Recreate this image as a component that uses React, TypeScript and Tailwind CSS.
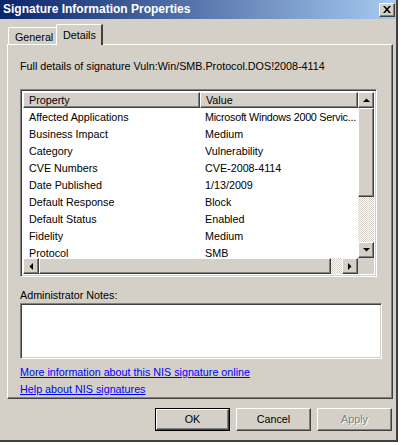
import React from "react";

const raised =
  "border border-t-white border-l-white border-r-[#404040] border-b-[#404040] shadow-[inset_-1px_-1px_#808080]";
const sunken =
  "border border-t-[#808080] border-l-[#808080] border-r-white border-b-white shadow-[inset_1px_1px_#404040,inset_-1px_-1px_#d4d0c8]";

function Arrow({ dir }: { dir: "up" | "down" | "left" | "right" }) {
  const pts: Record<string, string> = {
    up: "0,4 7,4 3.5,0.5",
    down: "0,0 7,0 3.5,3.5",
    left: "4,0 4,7 0.5,3.5",
    right: "0,0 0,7 3.5,3.5",
  };
  const w = dir === "up" || dir === "down" ? 7 : 4;
  const h = dir === "up" || dir === "down" ? 4 : 7;
  return (
    <svg width={w} height={h} viewBox={`0 0 ${w} ${h}`}>
      <polygon points={pts[dir]} fill="#000" />
    </svg>
  );
}

function SBtn({ dir }: { dir: "up" | "down" | "left" | "right" }) {
  return (
    <div className={`w-[16px] h-[16px] shrink-0 bg-[#d4d0c8] flex items-center justify-center ${raised}`}>
      <Arrow dir={dir} />
    </div>
  );
}

const rows: [string, string][] = [
  ["Affected Applications", "Microsoft Windows 2000 Servic..."],
  ["Business Impact", "Medium"],
  ["Category", "Vulnerability"],
  ["CVE Numbers", "CVE-2008-4114"],
  ["Date Published", "1/13/2009"],
  ["Default Response", "Block"],
  ["Default Status", "Enabled"],
  ["Fidelity", "Medium"],
  ["Protocol", "SMB"],
];

const checker =
  "bg-[repeating-conic-gradient(#d4d0c8_0%_25%,#ffffff_0%_50%)] bg-[length:2px_2px]";

export default function App() {
  return (
    <div
      className="w-[402px] h-[445px] bg-white text-[10.75px] leading-[13px] text-black"
      style={{ fontFamily: '"Liberation Sans", Arial, sans-serif' }}
    >
      <div className="w-[398px] h-[442px] bg-[#d4d0c8] border-r-2 border-b-2 border-r-[#404040] border-b-[#404040] flex flex-col">
        {/* Title bar */}
        <div className="h-[19px] shrink-0 flex items-center justify-between pl-[3px] pr-[1px] bg-[linear-gradient(to_right,#0a246a,#a6caf0)]">
          <span className="text-white font-bold text-[12px]">Signature Information Properties</span>
          <div className={`w-[16px] h-[14px] bg-[#d4d0c8] flex items-center justify-center ${raised}`}>
            <svg width="8" height="7" viewBox="0 0 8 7">
              <path d="M0 0h2l2 2.2L6 0h2L5 3.5 8 7H6L4 4.8 2 7H0l3-3.5z" fill="#000" />
            </svg>
          </div>
        </div>

        {/* Tabs */}
        <div className="flex items-end pl-[8px] mt-[5px] h-[20px] shrink-0 relative z-10">
          <div className="h-[17px] w-[49px] border-t border-l border-t-white border-l-white border-r border-r-[#808080] rounded-tl-[2px] flex items-start pt-[3px] pl-[6px]">
            General
          </div>
          <div className="h-[21px] w-[47px] -ml-[1px] mb-[-1px] bg-[#d4d0c8] border-t border-l border-t-white border-l-white border-r-2 border-r-[#404040] rounded-tl-[2px] flex items-start pt-[4px] pl-[6px]">
            Details
          </div>
        </div>

        {/* Panel */}
        <div className="ml-[7px] w-[386px] h-[355px] shrink-0 border border-t-white border-l-white border-r-[#404040] border-b-[#404040] shadow-[inset_-1px_-1px_#808080] flex flex-col pl-[12px] pt-[15px]">
          <div>Full details of signature Vuln:Win/SMB.Protocol.DOS!2008-4114</div>

          {/* List view */}
          <div className={`mt-[16px] w-[357px] h-[188px] bg-white ${sunken} p-[2px] flex flex-col`}>
            <div className="flex flex-1 min-h-0">
              <div className="flex-1 min-w-0 flex flex-col overflow-hidden">
                <div className="flex h-[16px] shrink-0">
                  <div className={`w-[177px] shrink-0 bg-[#d4d0c8] ${raised} pl-[5px] flex items-center`}>Property</div>
                  <div className={`flex-1 bg-[#d4d0c8] ${raised} pl-[5px] flex items-center`}>Value</div>
                </div>
                <div className="flex flex-col pt-[1px]">
                  {rows.map(([p, v], i) => (
                    <div key={p} className="flex h-[17px] shrink-0 items-center">
                      <div className="w-[177px] shrink-0 pl-[6px]">{p}</div>
                      <div className={`pl-[5px] whitespace-nowrap ${i === 0 ? "tracking-[-0.25px]" : ""}`}>{v}</div>
                    </div>
                  ))}
                </div>
              </div>
              <div className="w-[16px] shrink-0 flex flex-col">
                <SBtn dir="up" />
                <div className={`h-[89px] bg-[#d4d0c8] ${raised}`} />
                <div className={`flex-1 ${checker}`} />
                <SBtn dir="down" />
              </div>
            </div>
            <div className="flex h-[16px] shrink-0">
              <SBtn dir="left" />
              <div className={`w-[292px] bg-[#d4d0c8] ${raised}`} />
              <div className={`flex-1 ${checker}`} />
              <SBtn dir="right" />
              <div className="w-[16px] bg-[#d4d0c8]" />
            </div>
          </div>

          <div className="mt-[12px]">Administrator Notes:</div>
          <div className={`mt-[1px] w-[362px] h-[56px] bg-white ${sunken}`} />

          <a className="mt-[7px] text-[#0000ff] underline w-fit">More information about this NIS signature online</a>
          <a className="mt-[4px] text-[#0000ff] underline w-fit">Help about NIS signatures</a>
        </div>

        {/* Buttons */}
        <div className="flex justify-end gap-[6px] mt-[9px] pr-[4px]">
          <div className="w-[75px] h-[23px] border border-black">
            <div className={`w-full h-full bg-[#d4d0c8] ${raised} flex items-center justify-center`}>OK</div>
          </div>
          <div className={`w-[75px] h-[23px] bg-[#d4d0c8] ${raised} flex items-center justify-center`}>Cancel</div>
          <div className={`w-[75px] h-[23px] bg-[#d4d0c8] ${raised} flex items-center justify-center text-[#808080] [text-shadow:1px_1px_#fff]`}>Apply</div>
        </div>
      </div>
    </div>
  );
}
